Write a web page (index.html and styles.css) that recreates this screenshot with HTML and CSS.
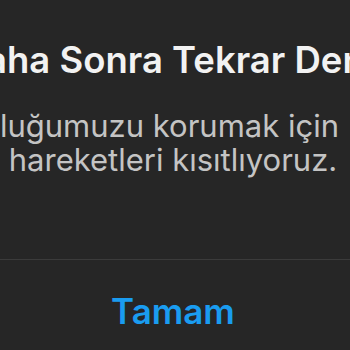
FILE: index.html
```html
<!DOCTYPE html>
<html lang="tr">
<head>
  <meta charset="UTF-8">
  <meta name="viewport" content="width=device-width, initial-scale=1.0">
  <title>Daha Sonra Tekrar Dene</title>
  <link rel="stylesheet" href="styles.css">
</head>
<body>
  <div class="alert">
    <div class="alert-body">
      <h1>Daha Sonra Tekrar Dene</h1>
      <p>
        <span class="line line-first">Topluluğumuzu korumak için</span>
        <span class="line">hareketleri kısıtlıyoruz.</span>
      </p>
    </div>
    <div class="alert-actions">
      <button>Tamam</button>
    </div>
  </div>
</body>
</html>
```

FILE: styles.css
```css
/* Genel */
* {
  margin: 0;
  padding: 0;
  box-sizing: border-box;
  font-family: Inter, "Noto Sans", sans-serif;
}

body {
  background-color: #262626;
  width: 350px;
  height: 350px;
  overflow: hidden;
}

.alert {
  width: 600px;
  margin-left: -127px;
  background-color: #262626;
}

.alert-body {
  padding-top: 38px;
  height: 259px;
  text-align: center;
}

.alert-body h1 {
  font-size: 36.5px;
  font-weight: 600;
  color: #f2f2f2;
  line-height: 44px;
  margin-bottom: 27px;
}

.alert-body p {
  font-size: 31px;
  font-weight: 400;
  color: #c4c4c4;
  line-height: 34px;
}

.line {
  display: block;
}

.line-first {
  text-align: right;
  padding-right: 134px;
}

.alert-actions {
  border-top: 1px solid #3b3b3b;
  height: 110px;
  display: flex;
  justify-content: center;
}

.alert-actions button {
  background: none;
  border: none;
  color: #1a9cf0;
  font-size: 35px;
  font-weight: 600;
  padding-top: 30px;
  align-self: flex-start;
  cursor: pointer;
}
```
